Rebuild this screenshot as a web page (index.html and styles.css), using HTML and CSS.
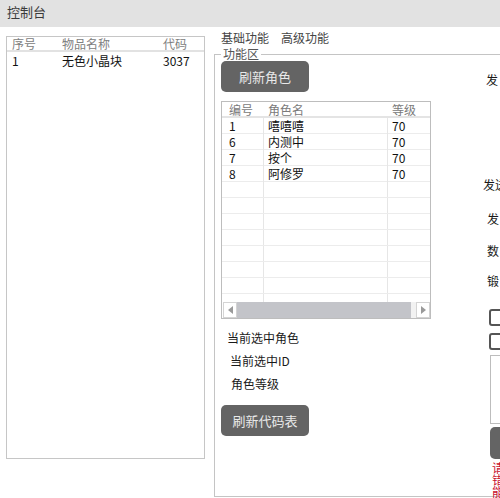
FILE: index.html
```html
<!DOCTYPE html>
<html>
<head>
<meta charset="utf-8">
<link rel="stylesheet" href="styles.css">
</head>
<body>
<div class="titlebar">控制台</div>
<div class="main">
  <div class="itemlist">
    <div class="ihead">
      <span class="c1">序号</span><span class="c2">物品名称</span><span class="c3">代码</span>
    </div>
    <div class="irow">
      <span class="c1">1</span><span class="c2">无色小晶块</span><span class="c3">3037</span>
    </div>
  </div>
  <div class="rightcol">
    <div class="tabs"><span>基础功能</span><span>高级功能</span></div>
    <fieldset class="group">
      <legend>功能区</legend>
      <div class="groupbody">
        <div class="leftpane">
          <div class="btn">刷新角色</div>
          <div class="grid">
            <div class="ghead">
              <span class="g1">编号</span><span class="g2">角色名</span><span class="g3">等级</span>
            </div>
            <div class="gbody">
              <div class="grow"><span class="g1">1</span><span class="g2">嘻嘻嘻</span><span class="g3">70</span></div>
              <div class="grow"><span class="g1">6</span><span class="g2">内测中</span><span class="g3">70</span></div>
              <div class="grow"><span class="g1">7</span><span class="g2">按个</span><span class="g3">70</span></div>
              <div class="grow"><span class="g1">8</span><span class="g2">阿修罗</span><span class="g3">70</span></div>
              <div class="grow"><span class="g1"></span><span class="g2"></span><span class="g3"></span></div>
              <div class="grow"><span class="g1"></span><span class="g2"></span><span class="g3"></span></div>
              <div class="grow"><span class="g1"></span><span class="g2"></span><span class="g3"></span></div>
              <div class="grow"><span class="g1"></span><span class="g2"></span><span class="g3"></span></div>
              <div class="grow"><span class="g1"></span><span class="g2"></span><span class="g3"></span></div>
              <div class="grow"><span class="g1"></span><span class="g2"></span><span class="g3"></span></div>
              <div class="grow"><span class="g1"></span><span class="g2"></span><span class="g3"></span></div>
              <div class="grow"><span class="g1"></span><span class="g2"></span><span class="g3"></span></div>
            </div>
            <div class="hscroll">
              <div class="sbtn"><svg width="5" height="8" viewBox="0 0 5 8"><path d="M5 0 L0 4 L5 8 Z" fill="#9a9a9a"/></svg></div>
              <div class="thumb"></div>
              <div class="track"></div>
              <div class="sbtn"><svg width="5" height="8" viewBox="0 0 5 8"><path d="M0 0 L5 4 L0 8 Z" fill="#9a9a9a"/></svg></div>
            </div>
          </div>
          <div class="lbl l1">当前选中角色</div>
          <div class="lbl l2">当前选中ID</div>
          <div class="lbl l3">角色等级</div>
          <div class="btn btn2">刷新代码表</div>
        </div>
        <div class="rightpane">
          <div class="rt r1">发</div>
          <div class="rt r2">发送</div>
          <div class="rt r3">发</div>
          <div class="rt r4">数</div>
          <div class="rt r5">锻</div>
          <div class="chk c-a"></div>
          <div class="chk c-b"></div>
          <div class="tarea"></div>
          <div class="btn3"></div>
          <div class="redtxt">请错能</div>
        </div>
      </div>
    </fieldset>
  </div>
</div>
</body>
</html>
```
FILE: styles.css
```css
html, body {
  margin: 0;
  padding: 0;
}
body {
  width: 500px;
  height: 498px;
  overflow: hidden;
  background: #ffffff;
  font-family: "Noto Sans CJK SC", "Noto Sans", sans-serif;
  font-size: 12px;
  color: #222;
}
.titlebar {
  height: 27px;
  background: #e2e2e2;
  color: #3a3a3a;
  font-size: 13px;
  line-height: 24px;
  padding-left: 7px;
}
.main {
  display: flex;
  align-items: flex-start;
}
.itemlist {
  margin: 9px 0 0 6px;
  width: 197px;
  height: 421px;
  border: 1px solid #c6c6c6;
  flex: none;
}
.ihead, .irow {
  display: grid;
  grid-template-columns: 50px 101px 1fr;
}
.ihead {
  height: 13px;
  line-height: 14px;
  color: #808080;
  border-bottom: 2px solid #e2e2e2;
}
.irow {
  height: 16px;
  line-height: 17px;
  color: #111;
}
.ihead span, .irow span {
  padding-left: 5px;
  white-space: nowrap;
}
.rightcol {
  margin-left: 9px;
  flex: none;
  width: 330px;
}
.tabs {
  margin-top: 4px;
  padding-left: 7px;
  line-height: 14px;
  height: 14px;
  color: #444;
  display: flex;
  gap: 12px;
}
.group {
  margin: 2px 0 0 0;
  padding: 0 0 0 6px;
  border: 1px solid #c4c4c4;
  border-right: none;
  height: 450px;
  box-sizing: border-box;
  min-width: 0;
}
.group legend {
  padding: 0 2px;
  margin-left: 0;
  font-size: 12px;
  line-height: 14px;
  color: #555;
}
.groupbody {
  display: flex;
  align-items: flex-start;
}
.leftpane {
  width: 210px;
  flex: none;
  display: flex;
  flex-direction: column;
  align-items: flex-start;
}
.btn {
  width: 88px;
  height: 31px;
  background: #646464;
  border-radius: 5px;
  color: #e9e9e9;
  font-size: 13px;
  line-height: 31px;
  text-align: center;
}
.grid {
  margin-top: 9px;
  width: 208px;
  height: 216px;
  border: 1px solid #bdbdbd;
  display: flex;
  flex-direction: column;
}
.ghead, .grow {
  display: grid;
  grid-template-columns: 42px 124px 1fr;
  flex: none;
}
.ghead {
  height: 14px;
  line-height: 15px;
  color: #7a7a7a;
  border-bottom: 2px solid #e4e4e4;
}
.gbody {
  height: 184px;
  overflow: hidden;
  flex: none;
}
.grow {
  height: 15px;
  line-height: 16px;
  border-bottom: 1px solid #ececec;
  color: #111;
}
.grow span {
  border-right: 1px solid #e6e6e6;
}
.grow span.g3 {
  border-right: none;
}
.g1 { padding-left: 7px; }
.g2 { padding-left: 4px; }
.g3 { padding-left: 4px; }
.grow span, .ghead span { white-space: nowrap; }
.hscroll {
  height: 16px;
  display: flex;
  align-items: stretch;
  padding-left: 1px;
}
.sbtn {
  border: 1px solid #d4d4d4;
  background: #fff;
  display: flex;
  align-items: center;
  justify-content: center;
  box-sizing: border-box;
  width: 14px;
}
.thumb {
  width: 174px;
  background: #c3c4c9;
}
.track {
  width: 5px;
  background: #f2f2f2;
}
.lbl {
  line-height: 14px;
  height: 14px;
  color: #1a1a1a;
  white-space: nowrap;
}
.l1 { margin-top: 12px; padding-left: 6px; }
.l2 { margin-top: 9px; padding-left: 9px; }
.l3 { margin-top: 9px; padding-left: 10px; }
.btn2 { margin-top: 14px; }
.rightpane {
  margin-left: 52px;
  width: 60px;
  flex: none;
  display: flex;
  flex-direction: column;
  align-items: flex-start;
}
.rt {
  line-height: 14px;
  height: 14px;
  white-space: nowrap;
  color: #1a1a1a;
}
.r1 { margin-top: 12px; padding-left: 3px; }
.r2 { margin-top: 91px; }
.r3 { margin-top: 20px; padding-left: 4px; }
.r4 { margin-top: 18px; padding-left: 4px; }
.r5 { margin-top: 16px; padding-left: 4px; }
.chk {
  width: 14px;
  height: 13px;
  border: 2px solid #555;
  border-radius: 3px;
  margin-left: 6px;
}
.c-a { margin-top: 21px; }
.c-b { margin-top: 7px; }
.tarea {
  margin-top: 5px;
  margin-left: 7px;
  width: 40px;
  height: 67px;
  border: 1px solid #bdbdbd;
}
.btn3 {
  margin-top: 3px;
  margin-left: 7px;
  width: 40px;
  height: 32px;
  background: #646464;
  border-radius: 5px;
}
.redtxt {
  margin-top: 3px;
  margin-left: 9px;
  width: 12px;
  font-size: 12px;
  line-height: 12px;
  color: #c8102e;
}
```
